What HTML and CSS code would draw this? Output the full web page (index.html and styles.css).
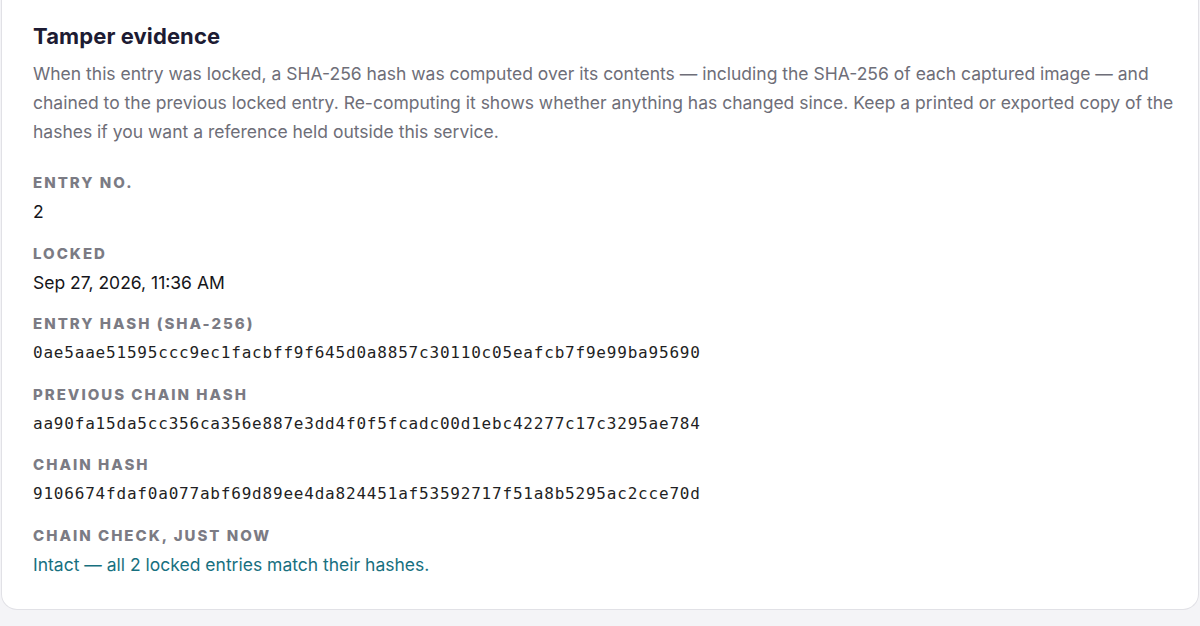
FILE: index.html
```html
<!DOCTYPE html>
<html lang="en">
<head>
<meta charset="utf-8">
<title>Tamper evidence</title>
<link rel="stylesheet" href="styles.css">
</head>
<body>
<section class="card">
  <h2 class="card-title">Tamper evidence</h2>
  <p class="card-intro">When this entry was locked, a SHA-256 hash was computed over its contents — including the SHA-256 of each captured image — and chained to the previous locked entry. Re-computing it shows whether anything has changed since. Keep a printed or exported copy of the hashes if you want a reference held outside this service.</p>
  <dl class="fields">
    <div class="field">
      <dt class="field-label">Entry no.</dt>
      <dd class="field-value">2</dd>
    </div>
    <div class="field">
      <dt class="field-label">Locked</dt>
      <dd class="field-value">Sep 27, 2026, 11:36 AM</dd>
    </div>
    <div class="field">
      <dt class="field-label">Entry hash (SHA-256)</dt>
      <dd class="field-value mono">0ae5aae51595ccc9ec1facbff9f645d0a8857c30110c05eafcb7f9e99ba95690</dd>
    </div>
    <div class="field">
      <dt class="field-label">Previous chain hash</dt>
      <dd class="field-value mono">aa90fa15da5cc356ca356e887e3dd4f0f5fcadc00d1ebc42277c17c3295ae784</dd>
    </div>
    <div class="field">
      <dt class="field-label">Chain hash</dt>
      <dd class="field-value mono">9106674fdaf0a077abf69d89ee4da824451af53592717f51a8b5295ac2cce70d</dd>
    </div>
    <div class="field">
      <dt class="field-label">Chain check, just now</dt>
      <dd class="field-value ok">Intact — all 2 locked entries match their hashes.</dd>
    </div>
  </dl>
</section>
</body>
</html>
```

FILE: styles.css
```css
html, body {
  margin: 0;
  padding: 0;
}
body {
  background: #f4f4f7;
  font-family: Inter, "Liberation Sans", sans-serif;
  padding: 0 1px 0 1px;
  min-height: 626px;
  box-sizing: border-box;
}
.card {
  background: #ffffff;
  border: 1px solid #e1e1e6;
  border-top: none;
  border-radius: 0 0 16px 16px;
  padding: 22px 22px 30px 31px;
}
.card-title {
  margin: 0;
  font-size: 22px;
  line-height: 28px;
  font-weight: 700;
  letter-spacing: 0.1px;
  color: #1d1b33;
}
.card-intro {
  margin: 9px 0 0 0;
  font-size: 17.5px;
  line-height: 29px;
  color: #6e6e78;
}
.fields {
  margin: 27px 0 0 0;
  display: flex;
  flex-direction: column;
  gap: 17.5px;
}
.field {
  display: flex;
  flex-direction: column;
  gap: 5px;
}
.field-label {
  font-size: 15px;
  line-height: 20px;
  font-weight: 800;
  letter-spacing: 2px;
  text-transform: uppercase;
  color: #7b7b84;
}
.field-value {
  margin: 0;
  font-size: 17.5px;
  line-height: 28px;
  color: #15151a;
}
.field-value.mono {
  font-family: "DejaVu Sans Mono", "Liberation Mono", monospace;
  font-size: 16px;
  letter-spacing: 0.8px;
  color: #1f1f24;
}
.field-value.ok {
  color: #17707f;
}
```
